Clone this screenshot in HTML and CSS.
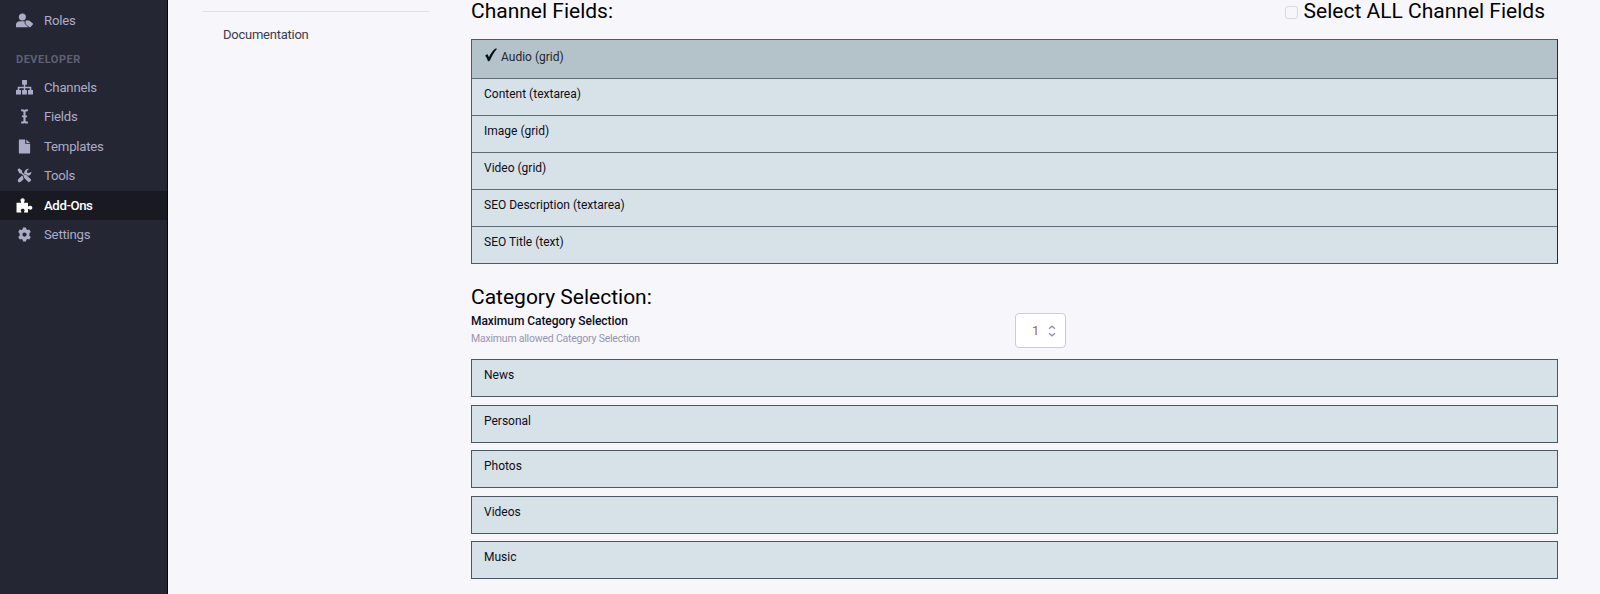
FILE: index.html
```html
<!DOCTYPE html>
<html lang="en">
<head>
	<meta charset="UTF-8">
	<title>Add-Ons</title>
	<link rel="stylesheet" href="styles.css">
</head>
<body>
	<div class="wrap">
		<div class="sidebar">
			<a class="item roles"><svg viewBox="0 0 16 14"><circle cx="6" cy="3.6" r="3.3"/><path d="M0 13.3v-2.2C0 9 1.600 7.800 3.700 7.800h4.600l3.600 5.500z"/><path class="cut" d="M8.200 6.300h4l4.200 4.100-3.900 3.900-4.300-4.200z"/><path d="M9 7h3.400l3.500 2.800c.2.400.1.800-.2 1.200l-2 2c-.4.400-.9.400-1.300 0L9 10.300z"/></svg><span>Roles</span></a>
			<div class="section">DEVELOPER</div>
			<a class="item"><svg viewBox="0 0 16 14"><path d="M5.700 0h4.600v4.400H8.700v1.800h5.700v3.100h1.600v4.200h-4.700V9.300h1.600V7.700H8.700v1.600h1.600v4.200H5.700V9.300h1.600V7.700H3.100v1.600h1.600v4.200H0V9.300h1.600V6.200h5.700V4.400H5.700z"/></svg><span>Channels</span></a>
			<a class="item"><svg viewBox="0 0 16 14"><path d="M4.800.2c1.400 0 2.500.1 3.200.7.700-.6 1.800-.7 3.200-.7v1.900c-1.600 0-2.200.2-2.200 1.100v2.900h1.400v1.700H9v2.900c0 .9.600 1.100 2.200 1.100v1.900c-1.400 0-2.500-.1-3.200-.7-.7.600-1.800.7-3.200.7v-1.900c1.600 0 2.200-.2 2.200-1.100V7.800H5.600V6.100H7V3.200c0-.9-.6-1.100-2.200-1.100z"/></svg><span>Fields</span></a>
			<a class="item"><svg viewBox="0 0 16 14"><path d="M3.400.3h5.300v4.200h4.600v8.500c0 .4-.3.700-.7.700H3.400c-.4 0-.7-.3-.7-.7V1c0-.4.300-.7.700-.7zM9.700.3l3.600 3.300H9.700z"/></svg><span>Templates</span></a>
			<a class="item"><svg viewBox="0 0 16 14"><path d="M1.400 1.600 2.900.2l2.800 2.100v1.700l2.500 2.400c.8-.2 1.500 0 2 .5l3.600 3.500c.5.500.5 1.200 0 1.700l-.8.8c-.5.500-1.200.5-1.700 0L7.800 9.400c-.5-.5-.7-1.300-.4-2L4.900 5H3.300z"/><path d="M14.400 3.400c.4 2.300-1.500 4.100-3.700 3.700-1-1-2-1.400-3-1.200-.2-2.900 1.600-5.800 4.600-5.200l-2 2 .3 1.700 1.700.3zM6.600 8.100c-.1.800.1 1.500.7 2.100l-2.400 2.500c-.9 1-2 .9-2.700.3-.8-.8-.7-2 .1-2.800L5.700 7z"/></svg><span>Tools</span></a>
			<a class="item active"><svg viewBox="0 0 16 14"><path d="M.5 4.400h4.300c.4-.7-.6-1-.6-2.300 0-1.100.9-1.900 2-1.900s2 .8 2 1.900c0 1.300-1 1.600-.6 2.300h3.700v3.300c.7.500 1-.5 2.200-.5 1.100 0 1.900.8 1.900 1.800s-.8 1.900-1.900 1.900c-1.200 0-1.500-.9-2.200-.5v3.100H7.600c-.4-.7.500-1 .5-1.900 0-1-.8-1.600-1.800-1.600s-1.800.6-1.800 1.600c0 .9.900 1.200.5 1.900H.5z"/></svg><span>Add-Ons</span></a>
			<a class="item"><svg viewBox="0 0 16 14"><path fill-rule="evenodd" d="M6.600.4h2.800l.4 1.700 1 .6 1.700-.5 1.400 2.400-1.300 1.200v2.400l1.300 1.200-1.400 2.400-1.700-.5-1 .6-.4 1.700H6.600l-.4-1.700-1-.6-1.700.5-1.400-2.400 1.300-1.200V5.800L2.100 4.600l1.400-2.400 1.700.5 1-.6zM8 5a2 2 0 1 0 0 4 2 2 0 0 0 0-4z"/></svg><span>Settings</span></a>
		</div>

		<div class="subnav">
			<a class="doc">Documentation</a>
		</div>

		<div class="main">
			<div class="head">
				<h2>Channel Fields:</h2>
				<label class="all"><i class="check"></i>Select ALL Channel Fields</label>
			</div>
			<ul class="fields">
				<li class="selected"><svg viewBox="0 0 13 14"><path d="M.6 7.700 2.800 6.100c.8.900 1.200 1.900 1.600 3.100C6.100 5.700 8.300 2.400 11 .6l1.600.1C9.400 4.300 7.200 8.300 5.500 12.600l-2 .8C2.900 11.200 2 9.300.6 7.700z"/></svg>Audio (grid)</li>
				<li>Content (textarea)</li>
				<li>Image (grid)</li>
				<li>Video (grid)</li>
				<li>SEO Description (textarea)</li>
				<li>SEO Title (text)</li>
			</ul>

			<h2>Category Selection:</h2>
			<div class="max">
				<div class="info">
					<b>Maximum Category Selection</b>
					<em>Maximum allowed Category Selection</em>
				</div>
				<div class="number">
					<span>1</span>
					<svg viewBox="0 0 8 12"><path d="M1 3.800 4 1.200l3 2.600M1 8.200l3 2.600 3-2.600"/></svg>
				</div>
			</div>
			<ul class="cats">
				<li>News</li>
				<li>Personal</li>
				<li>Photos</li>
				<li>Videos</li>
				<li>Music</li>
			</ul>
		</div>
	</div>
</body>
</html>
```
FILE: styles.css
```css
* {
	box-sizing: border-box;
}

body {
	margin: 0;
	background: #f7f6fb;
	font-family: Roboto, sans-serif;
	color: #0d0d19;
}

ul {
	list-style: none;
	margin: 0;
	padding: 0;
}

.wrap {
	display: flex;
	height: 594px;
	overflow: hidden;
}

/* sidebar */
.sidebar {
	width: 168px;
	flex: none;
	padding-top: 6px;
	background: #252633;
	border-right: 1px solid #05050c;
}

.item {
	display: flex;
	align-items: center;
	height: 29.5px;
	padding-left: 16px;
	font-size: 13.2px;
	letter-spacing: -.22px;
	color: #abacc6;
}

.item svg {
	width: 17px;
	height: 15px;
	margin-right: 11px;
	fill: #abacc6;
}

.item .cut {
	fill: #252633;
}

.item.active {
	background: #191922;
	color: #fff;
	font-weight: 500;
	letter-spacing: -.4px;
}

.item.active svg {
	fill: #fff;
}

.section {
	height: 37px;
	padding: 17px 0 0 16px;
	font: 700 11px/14px Roboto, sans-serif;
	letter-spacing: .5px;
	color: #5f6073;
}

/* second column */
.subnav {
	width: 227px;
	flex: none;
	margin: 11px 0 0 34px;
}

.doc {
	display: block;
	border-top: 1px solid #dfe0ee;
	padding: 14px 0 0 21px;
	font-size: 13px;
	letter-spacing: -.25px;
	line-height: 17px;
	color: #3c3c4c;
}

/* content */
.main {
	width: 1087px;
	margin-left: 42px;
}

h2 {
	margin: 0;
	font-size: 21px;
	font-weight: 400;
	line-height: 24px;
	color: #000;
}

.head {
	display: flex;
	justify-content: space-between;
	height: 39px;
}

.head h2,
.head .all {
	line-height: 22px;
}

.all {
	display: flex;
	padding-right: 13px;
	font-size: 21px;
	color: #000;
}

.check {
	width: 13px;
	height: 13px;
	margin: 6px 6px 0 0;
	border: 1px solid #d8d7e3;
	border-radius: 3px;
}

.fields {
	margin-bottom: 21px;
	border: 1px solid #4d5b66;
	border-right-color: #1d2e3a;
}

.fields li {
	height: 37px;
	padding: 7px 12px;
	border-top: 1px solid #5f6d78;
	background: #d7e2e8;
	font-size: 12px;
	line-height: 16px;
}

.fields li.selected {
	display: flex;
	height: 38px;
	padding-top: 9px;
	border-top: 0;
	background: #b4c2ca;
	color: #23282f;
}

.selected svg {
	width: 14px;
	height: 14px;
	margin: -1px 3px 0 0;
	fill: #0b1116;
}

.max {
	display: flex;
	height: 50px;
	padding-top: 4px;
}

.info {
	width: 544px;
}

.info b,
.info em {
	display: block;
	font: 500 12px/16px Roboto, sans-serif;
	letter-spacing: -.05px;
}

.info em {
	padding-top: 2px;
	font-size: 10.5px;
	font-weight: 400;
	letter-spacing: -.21px;
	color: #9695b0;
}

.number {
	display: flex;
	align-items: center;
	width: 51px;
	height: 35px;
	padding-left: 16px;
	background: #fff;
	border: 1px solid #cbcbda;
	border-radius: 4px;
	font-size: 13px;
	color: #9a6a3a;
}

.number svg {
	width: 8px;
	height: 12px;
	margin-left: 9px;
	fill: none;
	stroke: #8f90ad;
	stroke-width: 1.3;
}

.cats li {
	height: 38px;
	margin-bottom: 7.5px;
	padding: 7px 12px;
	border: 1px solid #4a5965;
	background: #d7e2e8;
	font-size: 12px;
	line-height: 16px;
}
```
